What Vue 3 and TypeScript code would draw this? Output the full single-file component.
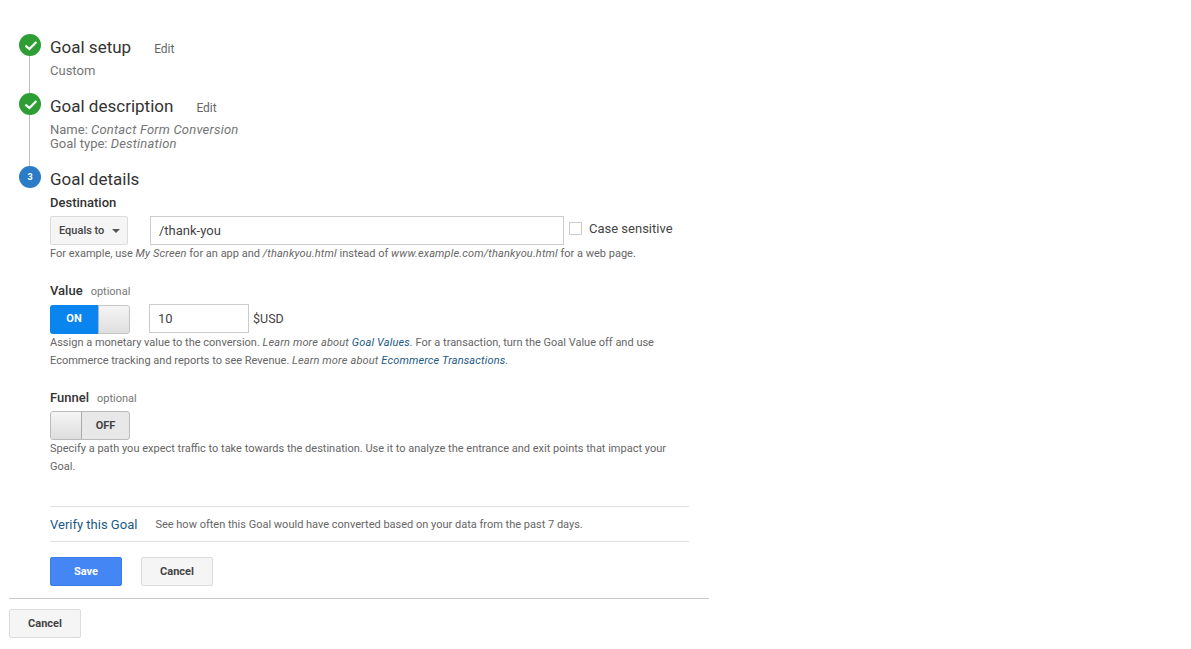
<script setup lang="ts">
const checkPath = "M6.4 11.6l4 3.5 7-7.1";
</script>

<template>
  <div class="page">
    <div class="step step-setup">
      <div class="rail">
        <span class="badge done">
          <svg width="22" height="22" viewBox="0 0 22 22"><path :d="checkPath" /></svg>
        </span>
        <span class="line"></span>
      </div>
      <div class="body">
        <div class="head"><h2>Goal setup</h2><a class="edit">Edit</a></div>
        <div class="summary first">Custom</div>
      </div>
    </div>

    <div class="step step-desc">
      <div class="rail">
        <span class="badge done">
          <svg width="22" height="22" viewBox="0 0 22 22"><path :d="checkPath" /></svg>
        </span>
        <span class="line"></span>
      </div>
      <div class="body">
        <div class="head"><h2>Goal description</h2><a class="edit">Edit</a></div>
        <div class="summary first">Name: <em>Contact Form Conversion</em></div>
        <div class="summary">Goal type: <em>Destination</em></div>
      </div>
    </div>

    <div class="step">
      <div class="rail">
        <span class="badge current">3</span>
      </div>
      <div class="body details">
        <div class="head"><h2>Goal details</h2></div>

        <div class="label dest-label"><b>Destination</b></div>
        <div class="row dest-row">
          <button class="select">Equals to <i class="caret"></i></button>
          <input class="field dest-input" value="/thank-you" />
          <label class="check"><span class="box"></span>Case sensitive</label>
        </div>
        <p class="help dest-help">
          For example, use <em>My Screen</em> for an app and <em>/thankyou.html</em> instead of
          <em>www.example.com/thankyou.html</em> for a web page.
        </p>

        <div class="label value-label"><b>Value</b><span>optional</span></div>
        <div class="row value-row">
          <div class="toggle on">
            <span class="state">ON</span><span class="knob"></span>
          </div>
          <input class="field value-input" value="10" />
          <span class="unit">$USD</span>
        </div>
        <p class="help tight">
          Assign a monetary value to the conversion. <em>Learn more about <a>Goal Values</a>.</em>
          For a transaction, turn the Goal Value off and use<br />
          Ecommerce tracking and reports to see Revenue. <em>Learn more about <a>Ecommerce Transactions</a>.</em>
        </p>

        <div class="label funnel-label"><b>Funnel</b><span>optional</span></div>
        <div class="row funnel-row">
          <div class="toggle off">
            <span class="knob"></span><span class="state">OFF</span>
          </div>
        </div>
        <p class="help tight funnel-help">
          Specify a path you expect traffic to take towards the destination. Use it to analyze the entrance and exit points that impact your<br />
          Goal.
        </p>

        <div class="verify">
          <a>Verify this Goal</a>
          <span>See how often this Goal would have converted based on your data from the past 7 days.</span>
        </div>

        <div class="actions">
          <button class="btn primary">Save</button>
          <button class="btn">Cancel</button>
        </div>
      </div>
    </div>

    <div class="footer">
      <button class="btn">Cancel</button>
    </div>
  </div>
</template>

<style>
html,
body {
  background: #fff;
}
</style>

<style scoped>
.page {
  box-sizing: border-box;
  width: 1191px;
  height: 649px;
  padding-top: 34px;
  overflow: hidden;
  font-family: Roboto, "Liberation Sans", sans-serif;
  color: #333;
}
.step {
  display: flex;
  margin-left: 19px;
}
.step-setup {
  height: 59px;
}
.step-desc {
  height: 73px;
}
.rail {
  display: flex;
  flex-direction: column;
  width: 22px;
  margin-right: 9px;
}
.badge {
  flex: none;
  width: 22px;
  height: 22px;
  border-radius: 50%;
  display: flex;
  align-items: center;
  justify-content: center;
}
.badge.done {
  background: #2e9e34;
}
.badge.done path {
  fill: none;
  stroke: #fff;
  stroke-width: 2.2;
}
.badge.current {
  background: #2a7cc7;
  color: #fff;
  font-size: 9px;
  font-weight: 700;
}
.line {
  flex: 1;
  width: 1px;
  margin-left: 10px;
  background: #bdbdbd;
}
.body {
  flex: none;
  width: 639px;
}
.head {
  display: flex;
  align-items: baseline;
  height: 28px;
  line-height: 26px;
}
h2 {
  margin: 0;
  font-size: 17px;
  font-weight: 400;
  color: #333;
}
.edit {
  margin-left: 23px;
  font-size: 12px;
  color: #666;
}
.summary {
  font-size: 13px;
  line-height: 14px;
  color: #757575;
}
.summary.first {
  margin-top: 2px;
}
.summary em {
  letter-spacing: 0.2px;
}
.label {
  font-size: 13px;
  line-height: 16px;
  color: #333;
}
.label b {
  font-weight: 500;
}
.label span {
  margin-left: 8px;
  font-size: 11px;
  color: #777;
}
.dest-label {
  margin-top: 1px;
}
.row {
  display: flex;
  align-items: center;
  height: 29px;
}
.dest-row {
  margin-top: 5px;
}
.select {
  box-sizing: border-box;
  width: 78px;
  height: 29px;
  padding: 0 0 0 8px;
  text-align: left;
  border: 1px solid #dcdcdc;
  border-radius: 2px;
  background: #f5f5f5;
  font: 500 11px Roboto, sans-serif;
  color: #444;
}
.caret {
  display: inline-block;
  margin-left: 5px;
  vertical-align: 1px;
  border-left: 4px solid transparent;
  border-right: 4px solid transparent;
  border-top: 4px solid #555;
}
.field {
  box-sizing: border-box;
  height: 29px;
  border: 1px solid #ccc;
  background: #fff;
  padding: 0 8px;
  font: 400 13px Roboto, sans-serif;
  color: #444;
  outline: none;
}
.dest-input {
  width: 414px;
  margin-left: 22px;
}
.check {
  display: flex;
  align-items: center;
  margin-left: 5px;
  margin-top: -5px;
  font-size: 13px;
  color: #444;
}
.box {
  box-sizing: border-box;
  width: 13px;
  height: 13px;
  margin-right: 7px;
  border: 1px solid #ccc;
}
.help {
  margin: 0;
  font-size: 11px;
  line-height: 16px;
  color: #666;
}
.help.tight {
  line-height: 18px;
}
.help em {
  letter-spacing: 0.15px;
}
.help a {
  color: #1c5a85;
}
.dest-help {
  margin-top: 1px;
}
.value-label {
  margin-top: 21px;
}
.value-row {
  margin-top: 5px;
}
.value-input {
  width: 100px;
  margin-left: 19px;
  margin-top: -2px;
}
.unit {
  margin-left: 4px;
  margin-top: -2px;
  font-size: 12.5px;
  color: #444;
}
.toggle {
  box-sizing: border-box;
  display: flex;
  width: 80px;
  height: 29px;
  border-radius: 3px;
  overflow: hidden;
  font-size: 11px;
  font-weight: 700;
  text-align: center;
}
.toggle.on .state {
  width: 48px;
  background: #0a84ee;
  color: #fff;
  line-height: 27px;
}
.toggle.off {
  background: #e8e8e8;
  color: #444;
  border: 1px solid #bbb;
}
.toggle.off .state {
  flex: 1;
  line-height: 27px;
}
.knob {
  box-sizing: border-box;
  background: linear-gradient(#f5f5f5, #dedede);
}
.toggle.on .knob {
  flex: 1;
  border: 1px solid #c4c4c4;
  border-left-color: #9db8d0;
  border-radius: 0 3px 3px 0;
}
.toggle.off .knob {
  width: 31px;
  border-right: 1px solid #aaa;
}
.funnel-label {
  margin-top: 20px;
}
.funnel-row {
  margin-top: 4px;
}
.funnel-help {
  height: 66px;
}
.verify {
  display: flex;
  align-items: center;
  height: 34px;
  border-top: 1px solid #e0e0e0;
  border-bottom: 1px solid #e0e0e0;
}
.verify a {
  font-size: 13px;
  color: #1c5a85;
}
.verify span {
  margin-left: 18px;
  font-size: 11px;
  color: #666;
}
.actions {
  display: flex;
  gap: 19px;
  margin-top: 15px;
}
.btn {
  box-sizing: border-box;
  width: 72px;
  height: 29px;
  padding: 0;
  border: 1px solid #dcdcdc;
  border-radius: 2px;
  background: #f5f5f5;
  font: 700 11px Roboto, sans-serif;
  color: #444;
}
.btn.primary {
  background: #4486f4;
  border-color: #3b7de8;
  color: #fff;
}
.footer {
  width: 700px;
  margin: 12px 0 0 9px;
  padding-top: 10px;
  border-top: 1px solid #c8c8c8;
}
</style>
